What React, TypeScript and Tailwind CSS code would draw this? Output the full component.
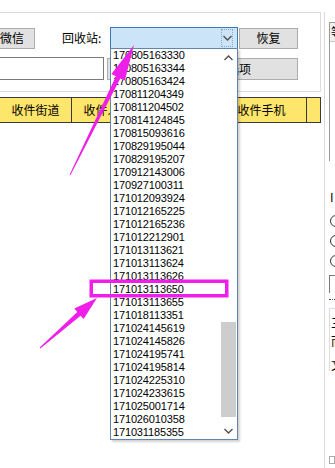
const codes = [
  '170805163330',
  '170805163344',
  '170805163424',
  '170811204349',
  '170811204502',
  '170814124845',
  '170815093616',
  '170829195044',
  '170829195207',
  '170912143006',
  '170927100311',
  '171012093924',
  '171012165225',
  '171012165236',
  '171012212901',
  '171013113621',
  '171013113624',
  '171013113626',
  '171013113650',
  '171013113655',
  '171018113351',
  '171024145619',
  '171024145826',
  '171024195741',
  '171024195814',
  '171024225310',
  '171024233615',
  '171025001714',
  '171026010358',
  '171031185355',
]

const cjk = { fontFamily: '"Noto Sans CJK SC", "Liberation Sans", sans-serif' }

const Chevron = ({ up }: { up?: boolean }) => (
  <svg width="9" height="6" viewBox="0 0 9 6">
    <polyline
      points={up ? '0.5,5 4.5,1 8.5,5' : '0.5,1 4.5,5 8.5,1'}
      fill="none"
      stroke="#505050"
      strokeWidth="1.4"
    />
  </svg>
)

const Dropdown = () => (
  <div className="absolute left-[110px] top-[48px] flex h-[392px] w-[128px] border border-[#6286ab] bg-white shadow-[2px_2px_2px_rgba(0,0,0,0.18)]">
    <div className="flex flex-1 flex-col" style={{ fontFamily: '"Liberation Sans", Arial, sans-serif' }}>
      {codes.map((c) => (
        <div key={c} className="flex h-[13px] items-center pl-[2px] text-[11px] leading-none tracking-[-0.15px] text-black">
          {c}
        </div>
      ))}
    </div>
    {/* scrollbar */}
    <div className="flex w-[17px] flex-col">
      <div className="flex h-[17px] items-center justify-center">
        <Chevron up />
      </div>
      <div className="flex-1">
        <div className="mx-[1px] mt-[256px] h-[95px] bg-[#cdcdcd]" />
      </div>
      <div className="flex h-[17px] items-center justify-center">
        <Chevron />
      </div>
    </div>
  </div>
)

const Annotations = () => (
  <svg className="pointer-events-none absolute left-0 top-0" width="335" height="468">
    <polygon
      points="69.6,174.8 115.9,76.2 111.4,74.0 134,45 124.8,80.6 120.3,78.4 70.4,175.2"
      fill="#ee1fe8"
    />
    <polygon
      points="39.7,347.6 77.3,312.0 74.3,308.6 97,298 83.6,319.1 80.6,315.7 40.3,348.4"
      fill="#ee1fe8"
    />
    <rect x="91.25" y="281.25" width="135.5" height="14.5" fill="none" stroke="#ee1fe8" strokeWidth="3.5" />
  </svg>
)

const Btn = ({ className, children }: { className: string; children?: React.ReactNode }) => (
  <div className={`flex shrink-0 items-center justify-center border border-[#adadad] bg-[#e1e1e1] text-[12px] text-black ${className}`} style={cjk}>
    {children}
  </div>
)

export default function App() {
  return (
    <div className="relative flex h-[468px] w-[335px] overflow-hidden bg-white">
      {/* left pane */}
      <div className="flex w-[322px] shrink-0 flex-col pt-[12px]">
        <div className="h-[80px] w-[321px] border-y border-r border-[#dcdcdc] pt-[14px]">
          <div className="flex h-[22px] items-center">
            <Btn className="ml-[-11px] h-[21px] w-[46px]">微信</Btn>
            <div className="ml-[27px] w-[48px] shrink-0 text-[12px] text-black" style={cjk}>
              回收站:
            </div>
            <div className="flex h-[22px] w-[128px] shrink-0 items-center justify-end border border-[#3f7ab5] bg-[#cce4f7] pr-[4px]">
              <div className="flex h-[18px] w-[12px] items-center justify-center border border-dotted border-[#8aa8c8]">
                <Chevron />
              </div>
            </div>
            <Btn className="ml-[1px] h-[21px] w-[59px]">恢复</Btn>
          </div>
          <div className="mt-[8px] flex h-[23px] items-center">
            <div className="ml-[-2px] h-[23px] w-[106px] shrink-0 border border-[#7a7a7a] bg-white" />
            <Btn className="ml-[3px] h-[22px] w-[191px] !justify-end pr-[46px]">显示全部选项</Btn>
          </div>
        </div>
        {/* table header */}
        <div className="mt-[5px] flex h-[26px] w-[321px] border border-l-0 border-[#3a3a3a] bg-[#fee56b] text-[12px] text-black" style={cjk}>
          <div className="flex w-[72px] items-center justify-center border-r border-[#3a3a3a]">收件街道</div>
          <div className="flex w-[72px] items-center justify-center border-r border-[#3a3a3a]">收件人名</div>
          <div className="flex w-[73px] items-center justify-center border-r border-[#3a3a3a]">收件区县</div>
          <div className="flex w-[90px] items-center justify-center border-r border-[#3a3a3a]">收件手机</div>
          <div className="flex-1" />
        </div>
        <div className="flex-1" />
      </div>

      {/* right pane */}
      <div className="ml-[2px] mt-[12px] flex flex-1 flex-col border-l border-[#d9d9d9] pl-[4px] text-[12px] text-black" style={cjk}>
        <div className="mt-[10px] h-[139px] border-l border-t border-[#9a9a9a]">
          <div className="flex h-[19px] items-center border-b border-[#c8c8c8] bg-[#f0f0f0] pl-[1px] leading-none">等</div>
        </div>
        <div className="mt-[30px] pl-[1px] leading-none">I</div>
        <div className="mt-[12px] flex flex-col gap-[8px] pl-[1px]">
          <div className="h-[12px] w-[12px] rounded-full border border-[#333]" />
          <div className="h-[12px] w-[12px] rounded-full border border-[#333]" />
          <div className="h-[12px] w-[12px] rounded-full border border-[#333]" />
        </div>
        <div className="mt-[8px] h-[18px] border-l border-t border-[#7a7a7a]" />
        <div className="mt-[6px] h-[1px] border-t border-dotted border-[#555]" />
        <div className="mt-[8px] flex flex-col gap-[6px] border-l border-t border-[#dcdcdc] pl-[1px] pt-[8px] leading-none">
          <span>三</span>
          <span>而</span>
          <span className="mt-[6px]">文</span>
        </div>
        <div className="flex-1" />
        <div className="mb-[4px] h-[8px] w-[6px] border border-[#aaa]" />
      </div>

      <Dropdown />
      <Annotations />
    </div>
  )
}
